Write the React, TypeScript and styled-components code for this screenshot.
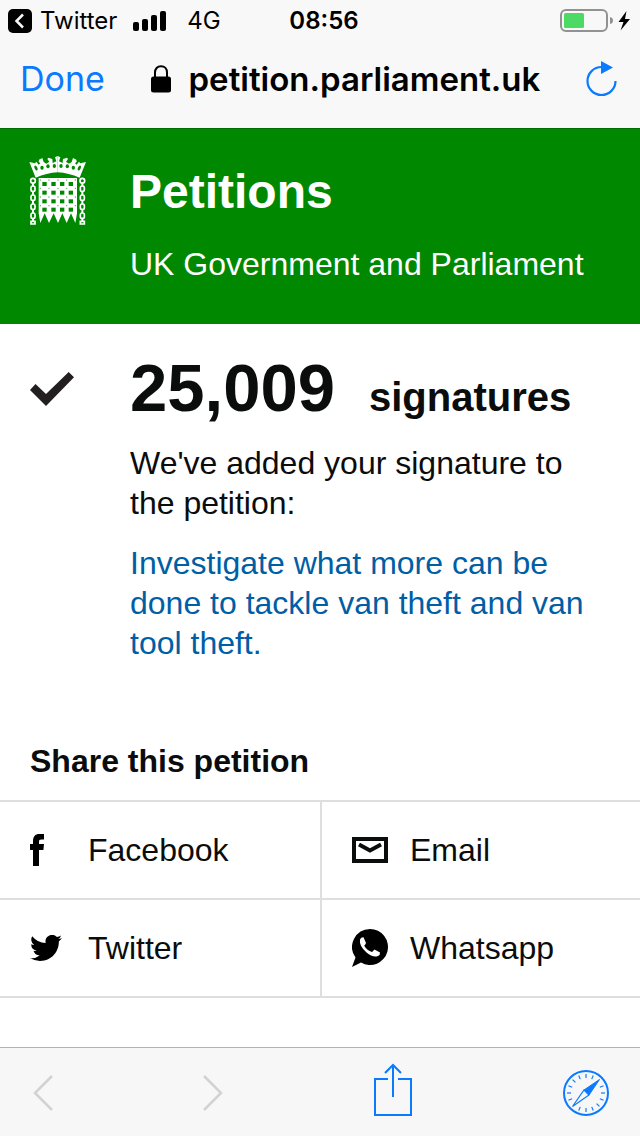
import React from "react";
import styled, { createGlobalStyle } from "styled-components";

const GlobalStyle = createGlobalStyle`
  *, *::before, *::after { box-sizing: border-box; }
  body {
    margin: 0;
    background: #fff;
    color: #0b0c0c;
    font-family: "Liberation Sans", Arial, sans-serif;
    font-size: 32px;
    line-height: 40px;
  }
  svg { display: block; flex: none; }
`;

const Screen = styled.div`
  display: flex;
  flex-direction: column;
  min-height: 100vh;
`;

const BrowserChrome = styled.div`
  background: #f8f8f8;
  color: #000;
  font-family: Inter, sans-serif;
`;

const StatusBar = styled.div`
  display: grid;
  grid-template-columns: 1fr auto 1fr;
  align-items: center;
  height: 42px;
  padding: 0 8px;
  font-size: 24px;
  line-height: 42px;
`;

const StatusGroup = styled.div<{ $end?: boolean }>`
  display: flex;
  align-items: center;
  justify-content: ${(p) => (p.$end ? "flex-end" : "flex-start")};
`;

const BackToApp = styled.button`
  display: flex;
  align-items: center;
  gap: 8px;
  margin-right: 16px;
  padding: 0;
  border: 0;
  background: none;
  color: inherit;
  font: inherit;
`;

const Network = styled.span`
  margin-left: 20px;
`;

const Clock = styled.time`
  margin-left: 8px;
  font-weight: 600;
`;

const AddressBar = styled.div`
  display: flex;
  align-items: center;
  justify-content: space-between;
  height: 86px;
  padding: 0 18px 12px 20px;
`;

const IconButton = styled.button`
  display: flex;
  align-items: center;
  justify-content: center;
  padding: 0;
  border: 0;
  background: none;
  color: #0a7aff;
  &:disabled { color: #d2d2d2; }
`;

const DoneButton = styled(IconButton)`
  font: 400 34px/40px Inter, sans-serif;
`;

const Address = styled.div`
  display: flex;
  align-items: center;
  gap: 18px;
  font-size: 33px;
  font-weight: 600;
`;

const Masthead = styled.header`
  display: grid;
  grid-template-columns: 58px 1fr;
  column-gap: 43px;
  align-items: start;
  min-height: 196px;
  padding: 27px 30px 0 29px;
  background: #008800;
  border-top: 1px solid #006c00;
  color: #fff;
`;

const SiteName = styled.h1`
  margin: 8px 0 24px;
  font-size: 48px;
  line-height: 56px;
`;

const Tagline = styled.p`
  margin: 0;
`;

const Main = styled.main`
  flex: 1;
`;

const Confirmation = styled.section`
  display: grid;
  grid-template-columns: 44px 1fr;
  column-gap: 56px;
  align-items: start;
  padding: 28px 30px 0;
  > svg { margin-top: 20px; }
`;

const Count = styled.h2`
  display: flex;
  align-items: baseline;
  gap: 34px;
  margin: 0 0 10px;
  font-size: 67px;
  line-height: 72px;
  small { font-size: 40px; }
`;

const Note = styled.p`
  margin: 0 0 20px;
`;

const PetitionLink = styled.a`
  display: block;
  color: #005ea5;
  text-decoration: none;
`;

const ShareTitle = styled.h2`
  margin: 78px 30px 19px;
  font-size: 32px;
  line-height: 40px;
`;

const ShareList = styled.ul`
  display: grid;
  grid-template-columns: 1fr 1fr;
  margin: 0;
  padding: 0;
  border-top: 2px solid #dedede;
  list-style: none;
`;

const ShareItem = styled.li`
  border-bottom: 2px solid #dedede;
  &:nth-child(even) { border-left: 2px solid #dedede; }
`;

const ShareLink = styled.a`
  display: grid;
  grid-template-columns: 58px 1fr;
  align-items: center;
  height: 96px;
  padding: 0 30px;
  color: inherit;
  text-decoration: none;
`;

const Toolbar = styled.nav`
  display: flex;
  align-items: center;
  justify-content: space-between;
  height: 89px;
  padding: 2px 30px 0 32px;
  border-top: 1px solid #b2b2b2;
  background: #f7f7f7;
`;

const BackBadge = () => (
  <svg width="24" height="24" viewBox="0 0 24 24" aria-hidden="true">
    <rect width="24" height="24" rx="5" fill="#000" />
    <path d="M15 5.500 8.500 12l6.500 6.500" fill="none" stroke="#f8f8f8" strokeWidth="2.500" />
  </svg>
);

const Signal = () => (
  <svg width="34" height="20" viewBox="0 0 34 20" role="img" aria-label="Signal strength">
    <rect x="0" y="11" width="6" height="9" rx="2" />
    <rect x="9" y="8" width="6" height="12" rx="2" />
    <rect x="18" y="4" width="6" height="16" rx="2" />
    <rect x="27" y="0" width="6" height="20" rx="2" />
  </svg>
);

const Battery = () => (
  <svg width="72" height="24" viewBox="0 0 72 24" role="img" aria-label="Battery charging">
    <rect x="1" y="1" width="46" height="21" rx="5" fill="none" stroke="#929292" strokeWidth="2" />
    <path d="M50 8q3 .5 3 3.500t-3 3.500z" fill="#929292" />
    <rect x="4" y="4" width="20" height="15" rx="1.500" fill="#4cd964" />
    <path d="M66.500 2 58.500 13h5l-3 8.500L70 10h-5z" fill="#000" />
  </svg>
);

const Lock = () => (
  <svg width="20" height="28" viewBox="0 0 20 28" role="img" aria-label="Secure">
    <path d="M4 13V7.500C4 3.800 6.300 1.200 10 1.200s6 2.600 6 6.300V13" fill="none" stroke="#000" strokeWidth="2" />
    <rect x="0" y="11.500" width="20" height="16" rx="2.500" />
  </svg>
);

const Reload = () => (
  <svg width="36" height="38" viewBox="0 0 36 38" fill="none" aria-hidden="true">
    <path d="M15.500 7A14 14 0 1 0 29.500 21" stroke="currentColor" strokeWidth="2.200" />
    <path d="M15 1v13l12-6.500z" fill="currentColor" />
  </svg>
);

const chainLinks = [118, 145, 172, 199];
const holeColumns = [68, 95, 121, 147];
const holeRows = [110, 136, 162, 187];
const rivetColumns = [62, 88, 115, 141, 167];
const rivetRows = [104, 129, 155, 181];

const CrownHalf = () => (
  <>
    <path
      d="M114 32l-8 4 4 12-11 5-1-12-12-4-3 4 6 8-9 6-8-5-4-12-10 5-1 6 5 5-5 4-7-9-4 5-17-4 19 47q33-14 66-16z"
      fill="#fff"
    />
    <g fill="#008800">
      <ellipse cx="49" cy="68" rx="4" ry="8" transform="rotate(-28 49 68)" />
      <ellipse cx="67" cy="67" rx="5" ry="6" />
      <ellipse cx="85" cy="63" rx="5" ry="6" />
      <ellipse cx="104" cy="62" rx="5" ry="6" />
    </g>
  </>
);

const Portcullis = () => (
  <svg width="58" height="69" viewBox="28 32 174 207" role="img" aria-label="Parliament portcullis">
    <CrownHalf />
    <g transform="translate(228 0) scale(-1 1)"><CrownHalf /></g>
    <g fill="none" stroke="#fff">
      {[40, 188].map((x) => (
        <g key={x} strokeWidth="5">
          <circle cx={x} cy="106" r="7" />
          {chainLinks.map((y) => (
            <g key={y}>
              <path d={`M${x} ${y - 6}v11`} strokeWidth="6" />
              <rect x={x - 6} y={y + 4} width="12" height="16" rx="5" />
            </g>
          ))}
          <path d={`M${x} 220v7`} strokeWidth="6" />
          <path d={`M${x - 6} 236v-8h12v8z`} />
        </g>
      ))}
    </g>
    <path d="M57 98h115v106l-5 29-13-29-13 29-13-29-13 29-13-29-14 29-13-29-13 29-5-29z" fill="#fff" />
    <g fill="#008800">
      {holeRows.map((y) => holeColumns.map((x) => <rect key={`${x}-${y}`} x={x} y={y} width="13" height="12" />))}
      {rivetRows.map((y) =>
        rivetColumns.map((x) => <circle key={`${x}-${y}`} cx={x} cy={y} r="2" opacity="0.700" />)
      )}
    </g>
  </svg>
);

const Check = () => (
  <svg width="44" height="34" viewBox="0 0 44 34" aria-hidden="true">
    <path d="M0 18 5.500 12 16 22 38.700 0 44 5.300 16 34z" fill="#231f20" />
  </svg>
);

const FacebookIcon = () => (
  <svg width="14" height="32" viewBox="0 0 14 32" aria-hidden="true">
    <path d="M3 32V16H0v-6h3V7.500C3 2.500 5 0 9.500 0H14v5.500h-2.500C9.500 5.500 9 6.200 9 8v2h5l-.6 6H9v16z" />
  </svg>
);

const TwitterIcon = () => (
  <svg width="32" height="26" viewBox="0 0 32 26" aria-hidden="true">
    <path d="M32 3.100a13 13 0 0 1-3.800 1A6.600 6.600 0 0 0 31.100.5a13 13 0 0 1-4.200 1.600A6.560 6.560 0 0 0 15.700 8.100 18.600 18.600 0 0 1 2.200 1.200a6.560 6.560 0 0 0 2 8.800 6.500 6.500 0 0 1-3-.8v.1a6.560 6.560 0 0 0 5.300 6.400 6.600 6.600 0 0 1-3 .1 6.560 6.560 0 0 0 6.100 4.600A13.200 13.200 0 0 1 0 23.100 18.600 18.600 0 0 0 10.100 26C22.200 26 28.800 16 28.800 7.300v-.8A13.300 13.300 0 0 0 32 3.100z" />
  </svg>
);

const EmailIcon = () => (
  <svg width="36" height="26" viewBox="0 0 36 26" fill="none" stroke="#0b0c0c" strokeWidth="4" aria-hidden="true">
    <rect x="2" y="2" width="32" height="22" />
    <path d="M7 7.500 18 13.500 29 7.500" />
  </svg>
);

const WhatsappIcon = () => (
  <svg width="36" height="38" viewBox="0 0 36 38" aria-hidden="true">
    <path d="M18 0a18 18 0 1 1-9 33.600L0 38l3.500-9.500A18 18 0 0 1 18 0z" />
    <path d="M8 10.500Q9 8 11.500 8.200L14 14q-.5 1.500-1.800 2.800Q15 21.500 20 23l2.500-2.500L28 23.500q.3 2.500-2 3.500-5 2-11.500-3.500Q7 17 8 10.500z" fill="#fff" />
  </svg>
);

const Chevron = ({ back }: { back?: boolean }) => (
  <svg width="22" height="36" viewBox="0 0 22 36" fill="none" stroke="currentColor" strokeWidth="2.500" aria-hidden="true">
    <path d={back ? "M20 1 3 18l17 17" : "M1 1l17 17L1 35"} />
  </svg>
);

const ShareIcon = () => (
  <svg width="40" height="60" viewBox="0 0 40 60" fill="none" stroke="currentColor" strokeWidth="2" aria-hidden="true">
    <path d="M15 16H2v36h36V16H25M20 34V2M12 10l8-8 8 8" />
  </svg>
);

const ticks = Array.from({ length: 16 }, (_, i) => i * 22.5).filter((a) => a !== 45 && a !== 225);

const Compass = () => (
  <svg width="48" height="48" viewBox="0 0 48 48" fill="none" stroke="currentColor" aria-hidden="true">
    <circle cx="24" cy="24" r="22" strokeWidth="2" />
    {ticks.map((a) => (
      <path key={a} d="M24 5v4" strokeWidth="1.200" transform={`rotate(${a} 24 24)`} />
    ))}
    <path d="M37.500 10.500 22 21l5 5z" fill="currentColor" />
    <path d="M10.500 37.500 22 21l5 5z" strokeWidth="1.200" />
  </svg>
);

const shareTargets = [
  { name: "Facebook", Icon: FacebookIcon },
  { name: "Email", Icon: EmailIcon },
  { name: "Twitter", Icon: TwitterIcon },
  { name: "Whatsapp", Icon: WhatsappIcon },
];

export default function App() {
  return (
    <Screen>
      <GlobalStyle />
      <BrowserChrome>
        <StatusBar>
          <StatusGroup>
            <BackToApp><BackBadge />Twitter</BackToApp>
            <Signal />
            <Network>4G</Network>
          </StatusGroup>
          <Clock>08:56</Clock>
          <StatusGroup $end><Battery /></StatusGroup>
        </StatusBar>
        <AddressBar>
          <DoneButton>Done</DoneButton>
          <Address><Lock />petition.parliament.uk</Address>
          <IconButton aria-label="Reload"><Reload /></IconButton>
        </AddressBar>
      </BrowserChrome>
      <Masthead>
        <Portcullis />
        <div>
          <SiteName>Petitions</SiteName>
          <Tagline>UK Government and Parliament</Tagline>
        </div>
      </Masthead>
      <Main>
        <Confirmation>
          <Check />
          <div>
            <Count>25,009 <small>signatures</small></Count>
            <Note>We've added your signature to the petition:</Note>
            <PetitionLink href="#petition">
              Investigate what more can be done to tackle van theft and van tool theft.
            </PetitionLink>
          </div>
        </Confirmation>
        <ShareTitle>Share this petition</ShareTitle>
        <ShareList>
          {shareTargets.map(({ name, Icon }) => (
            <ShareItem key={name}>
              <ShareLink href={`#${name.toLowerCase()}`}><Icon />{name}</ShareLink>
            </ShareItem>
          ))}
        </ShareList>
      </Main>
      <Toolbar aria-label="Browser">
        <IconButton disabled aria-label="Back"><Chevron back /></IconButton>
        <IconButton disabled aria-label="Forward"><Chevron /></IconButton>
        <IconButton aria-label="Share"><ShareIcon /></IconButton>
        <IconButton aria-label="Open in Safari"><Compass /></IconButton>
      </Toolbar>
    </Screen>
  );
}
